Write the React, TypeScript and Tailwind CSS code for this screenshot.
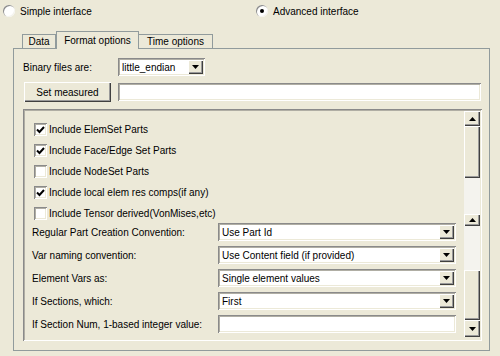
const raised =
  "bg-[#ECE9D8] shadow-[inset_1px_1px_0_#ffffff,inset_-1px_-1px_0_#404040,inset_-2px_-2px_0_#9a9a9a]";
const sunken =
  "shadow-[inset_1px_1px_0_#8a8a8a,inset_-1px_-1px_0_#ffffff,inset_2px_2px_0_#b0aea4,inset_-2px_-2px_0_#ece9d8]";

function Arrow({ up }: { up?: boolean }) {
  return (
    <svg width="7" height="4" viewBox="0 0 7 4">
      {up ? <path d="M3.5 0 L7 4 L0 4 Z" fill="#000" /> : <path d="M0 0 L7 0 L3.5 4 Z" fill="#000" />}
    </svg>
  );
}

function Radio({ checked }: { checked?: boolean }) {
  return (
    <span className="relative flex h-[12px] w-[12px] items-center justify-center rounded-full bg-white shadow-[inset_1px_1px_0_#8a8a8a,inset_-1px_-1px_0_#f4f3ee]">
      {checked ? <span className="h-[4px] w-[4px] rounded-full bg-black" /> : null}
    </span>
  );
}

function Check({ checked }: { checked?: boolean }) {
  return (
    <span className={`flex h-[13px] w-[13px] items-center justify-center bg-white ${sunken}`}>
      {checked ? (
        <svg width="9" height="8" viewBox="0 0 9 8">
          <path d="M1 3.5 L3.5 6 L8 1" stroke="#000" strokeWidth="2" fill="none" />
        </svg>
      ) : null}
    </span>
  );
}

function Select({ value, className }: { value: string; className: string }) {
  return (
    <div className={`flex h-[18px] items-center bg-white pl-[4px] pr-[2px] ${sunken} ${className}`}>
      <span className="flex-1 truncate leading-[13px]">{value}</span>
      <span className={`flex h-[14px] w-[15px] items-center justify-center ${raised}`}>
        <Arrow />
      </span>
    </div>
  );
}

const checks = [
  { label: "Include ElemSet Parts", checked: true },
  { label: "Include Face/Edge Set Parts", checked: true },
  { label: "Include NodeSet Parts", checked: false },
  { label: "Include local elem res comps(if any)", checked: true },
  { label: "Include Tensor derived(VonMises,etc)", checked: false },
];

const rows = [
  { label: "Regular Part Creation Convention:", value: "Use Part Id" },
  { label: "Var naming convention:", value: "Use Content field (if provided)" },
  { label: "Element Vars as:", value: "Single element values" },
  { label: "If Sections, which:", value: "First" },
  { label: "If Section Num, 1-based integer value:", value: "" },
];

export default function App() {
  return (
    <div className="relative h-[356px] w-[500px] overflow-hidden whitespace-nowrap bg-[#ECE9D8] font-['Liberation_Sans',sans-serif] text-[10px] leading-[13px] text-black">
      <div className="flex h-[21px] items-center pt-[1px]">
        <div className="ml-[3px] flex w-[250px] items-center gap-[5px]">
          <Radio />
          <span>Simple interface</span>
        </div>
        <div className="ml-[3px] flex items-center gap-[5px]">
          <Radio checked />
          <span>Advanced interface</span>
        </div>
      </div>

      <div className="ml-[13px] mt-[10px] flex h-[17px] items-end pl-[9px]">
        <div className="flex h-[14px] w-[34px] items-center justify-center border border-b-0 border-[#919B9C] bg-[#ECE9D8]">
          Data
        </div>
        <div className="relative z-10 mb-[-1px] flex h-[18px] w-[83px] items-center justify-center border border-b-0 border-[#919B9C] bg-[#ECE9D8] pb-[1px]">
          Format options
        </div>
        <div className="flex h-[14px] w-[74px] items-center justify-center border border-b-0 border-l-0 border-[#919B9C] bg-[#ECE9D8]">
          Time options
        </div>
      </div>

      <div className="ml-[13px] flex h-[303px] w-[477px] flex-col border border-[#919B9C] bg-[#ECE9D8] pl-[9px]">
        <div className="mt-[9px] flex h-[18px] items-center">
          <span className="w-[95px]">Binary files are:</span>
          <Select value="little_endian" className="w-[87px]" />
        </div>
        <div className="mt-[6px] flex items-center">
          <div className={`ml-[1px] flex h-[20px] w-[87px] items-center justify-center ${raised}`}>Set measured</div>
          <div className={`ml-[7px] h-[18px] w-[363px] bg-white ${sunken}`} />
        </div>

        <div className={`mt-[7px] flex h-[232px] w-[459px] p-[2px] ${sunken}`}>
          <div className="flex flex-1 flex-col">
            <div className="flex flex-col gap-[8px] pl-[9px] pt-[12px]">
              {checks.map((c) => (
                <div key={c.label} className="flex h-[13px] items-center gap-[2px]">
                  <Check checked={c.checked} />
                  <span>{c.label}</span>
                </div>
              ))}
            </div>
            <div className="mt-[3px] flex flex-col gap-[5px] pl-[7px]">
              {rows.map((r, i) => (
                <div key={r.label} className="flex h-[18px] items-center">
                  <span className="w-[186px]">{r.label}</span>
                  {i < 4 ? (
                    <Select value={r.value} className="w-[238px]" />
                  ) : (
                    <div className={`h-[18px] w-[238px] bg-white ${sunken}`} />
                  )}
                </div>
              ))}
            </div>
          </div>
          <div className="flex w-[16px] flex-col">
            <div className={`flex h-[15px] items-center justify-center ${raised}`}>
              <Arrow up />
            </div>
            <div className={`h-[52px] ${raised}`} />
            <div className="h-[36px] bg-[#F4F3EE]" />
            <div className={`flex h-[12px] items-center justify-center ${raised}`}>
              <Arrow up />
            </div>
            <div className="h-[44px] bg-[#F4F3EE]" />
            <div className={`h-[50px] ${raised}`} />
            <div className={`flex h-[17px] items-center justify-center ${raised}`}>
              <Arrow />
            </div>
          </div>
        </div>
      </div>
    </div>
  );
}
